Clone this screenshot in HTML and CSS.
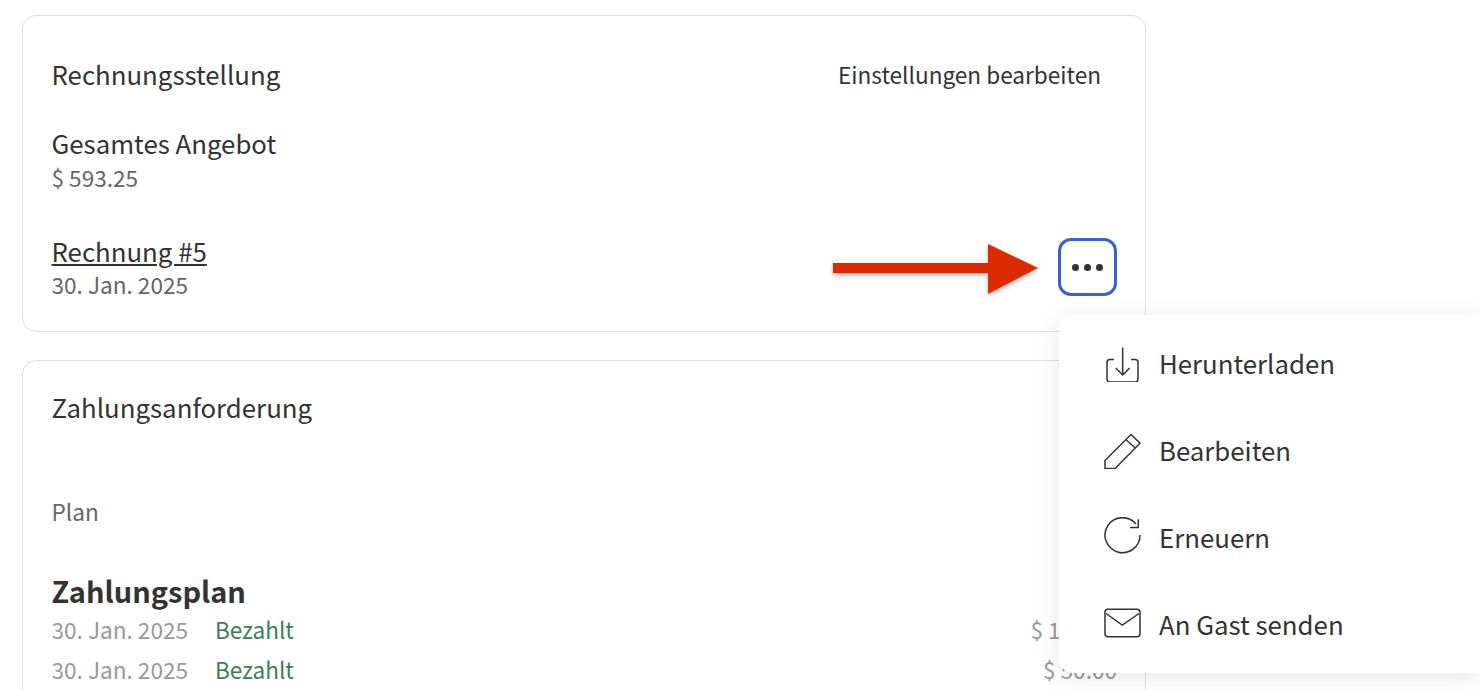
FILE: index.html
```html
<!DOCTYPE html>
<html lang="de">
<head>
    <meta charset="UTF-8">
    <title>Rechnungsstellung</title>
    <link rel="stylesheet" href="styles.css">
</head>
<body>
    <div class="page">
        <!-- Rechnungsstellung -->
        <section class="card billing">
            <div class="card-head">
                <h2>Rechnungsstellung</h2>
                <span class="head-link">Einstellungen bearbeiten</span>
            </div>
            <div class="total">
                <div class="label">Gesamtes Angebot</div>
                <div class="sub">$ 593.25</div>
            </div>
            <div class="invoice">
                <div>
                    <div class="label"><u>Rechnung #5</u></div>
                    <div class="sub">30. Jan. 2025</div>
                </div>
                <button class="more"><span></span><span></span><span></span></button>
            </div>
        </section>

        <!-- Zahlungsanforderung -->
        <section class="card request">
            <h2>Zahlungsanforderung</h2>
            <div class="plan-label">Plan</div>
            <h3>Zahlungsplan</h3>
            <div class="pay-row">
                <span class="date">30. Jan. 2025</span>
                <span class="paid">Bezahlt</span>
                <span class="amount">$ 100.00</span>
            </div>
            <div class="pay-row">
                <span class="date">30. Jan. 2025</span>
                <span class="paid">Bezahlt</span>
                <span class="amount">$ 50.00</span>
            </div>
        </section>
    </div>

    <!-- Pfeil -->
    <svg class="arrow" width="230" height="80" viewBox="0 0 230 80">
        <defs>
            <filter id="arrow-shadow" x="-10%" y="-20%" width="120%" height="150%">
                <feDropShadow dx="0" dy="2" stdDeviation="2.500" flood-color="#000" flood-opacity="0.3"/>
            </filter>
        </defs>
        <path d="M3 23H158V4L208 28L158 54V33H3Z" fill="#dc2c00" filter="url(#arrow-shadow)"/>
    </svg>

    <!-- Menü -->
    <div class="menu">
        <div class="menu-item">
            <svg width="38" height="38" viewBox="0 0 38 38" fill="none" stroke="#333" stroke-width="1.5">
                <path d="M11 15.500H7A3 3 0 0 0 4 18.500V35A3 3 0 0 0 7 38H32A3 3 0 0 0 35 35V18.500A3 3 0 0 0 32 15.500H28"/>
                <path d="M19.700 3.500V31M12.700 24L19.700 31L26.700 24"/>
            </svg>
            <span>Herunterladen</span>
        </div>
        <div class="menu-item">
            <svg width="38" height="38" viewBox="0 0 38 38" fill="none" stroke="#333" stroke-width="1.5">
                <path d="M2 29.500L28 3.500L37 12.200L12 37.500H2Z"/>
                <path d="M23 8.800L32 16.800"/>
            </svg>
            <span>Bearbeiten</span>
        </div>
        <div class="menu-item">
            <svg width="38" height="38" viewBox="0 0 38 38" fill="none" stroke="#333" stroke-width="1.5">
                <path d="M33 7A17.500 17.500 0 1 0 37 18"/>
                <path d="M35.300 2.200V10.500H27"/>
            </svg>
            <span>Erneuern</span>
        </div>
        <div class="menu-item">
            <svg width="38" height="38" viewBox="0 0 38 38" fill="none" stroke="#333" stroke-width="1.5">
                <rect x="2" y="5.200" width="35" height="27.600" rx="3"/>
                <path d="M3 9.500L19.300 21L36 9.500"/>
            </svg>
            <span>An Gast senden</span>
        </div>
    </div>
</body>
</html>
```

FILE: styles.css
```css
html, body {
    margin: 0;
    padding: 0;
    height: 690px;
    overflow: hidden;
    background-color: #ffffff;
    font-family: "Noto Sans CJK SC", "Noto Sans", sans-serif;
    color: #333333;
}

.page {
    width: 1124px;
    height: 675px;
    overflow: hidden;
    padding: 15px 0 0 22px;
    display: flex;
    flex-direction: column;
    gap: 28px;
}

/* Karten */
.card {
    box-sizing: border-box;
    flex-shrink: 0;
    border: 1px solid #dedede;
    border-radius: 14px;
    padding: 38px 28px 0 28.5px;
}
.billing {
    height: 317px;
}
.request {
    height: 400px;
    padding-top: 26px;
}
.card-head {
    display: flex;
    justify-content: space-between;
    align-items: center;
}
h2 {
    margin: 0;
    font-size: 25.8px;
    line-height: 40px;
    font-weight: 400;
}
.head-link {
    font-size: 22.6px;
    margin-right: 16px;
}
.label {
    font-size: 25.8px;
    line-height: 36px;
}
.sub {
    font-size: 22.6px;
    line-height: 32px;
    color: #666666;
}
.total {
    margin-top: 31px;
}
.total .sub {
    margin-top: 1px;
}
.invoice {
    margin-top: 39px;
    display: flex;
    justify-content: space-between;
    align-items: center;
}
.more {
    box-sizing: border-box;
    width: 59px;
    height: 58px;
    border: 3px solid #3a62c8;
    border-radius: 13px;
    background: #ffffff;
    padding: 0;
    display: flex;
    justify-content: center;
    align-items: center;
    gap: 5px;
}
.more span {
    width: 7px;
    height: 7px;
    border-radius: 50%;
    background-color: #333333;
}

/* Zahlungsplan */
.plan-label {
    margin-top: 69px;
    font-size: 22.6px;
    line-height: 32px;
    color: #666666;
}
h3 {
    margin: 42px 0 0;
    font-size: 29px;
    line-height: 40px;
    font-weight: 700;
}
.pay-row {
    display: flex;
    font-size: 22.6px;
    line-height: 40px;
    color: #999999;
}
.date {
    width: 163.5px;
}
.paid {
    color: #3f7d54;
}
.amount {
    margin-left: auto;
}

/* Pfeil */
.arrow {
    position: absolute;
    left: 830px;
    top: 240px;
}

/* Menü */
.menu {
    position: absolute;
    left: 1059px;
    top: 315px;
    box-sizing: border-box;
    width: 421px;
    height: 358px;
    padding: 4.6px 0 0 44px;
    background-color: #ffffff;
    border-radius: 14px 0 0 14px;
    box-shadow: 0 4px 24px rgba(0, 0, 0, 0.1);
}
.menu-item {
    display: flex;
    align-items: center;
    gap: 18px;
    height: 86.7px;
    font-size: 25.8px;
}
```
